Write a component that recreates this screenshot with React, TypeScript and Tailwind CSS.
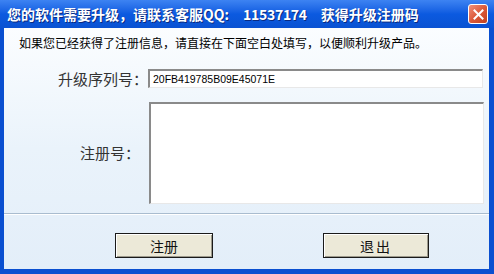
import React from "react";

const cjk = { fontFamily: '"Noto Sans CJK SC", "Noto Sans", sans-serif' };

export default function App() {
  return (
    <div
      className="w-[494px] h-[274px] flex flex-col bg-[#0a4fd0] overflow-hidden"
      style={cjk}
    >
      {/* Title bar */}
      <div className="h-[28px] shrink-0 flex items-center pl-[7px] pr-[6px] bg-gradient-to-b from-[#3d83f2] via-[#0b5ae0] to-[#0a52d2]">
        <div className="flex items-center text-[14px] font-bold text-white leading-none whitespace-nowrap [text-shadow:1px_1px_0_#0a2a80]">
          <span>您的软件需要升级，请联系客服QQ:</span>
          <span className="ml-[14px] tracking-[-0.3px]">11537174</span>
          <span className="ml-[14px]">获得升级注册码</span>
        </div>
        <div className="ml-auto w-[20px] h-[20px] rounded-[3px] border border-white bg-gradient-to-br from-[#f0907a] via-[#dc5a3a] to-[#c0401e] flex items-center justify-center">
          <svg width="11" height="11" viewBox="0 0 11 11">
            <path d="M1.5 1.5 L9.5 9.5 M9.5 1.5 L1.5 9.5" stroke="white" strokeWidth="2" strokeLinecap="square" />
          </svg>
        </div>
      </div>

      {/* Client area */}
      <div className="flex-1 ml-[4px] mr-[5px] mb-[5px] flex flex-col bg-gradient-to-b from-[#fbfdff] via-[#eaf3fb] to-[#e3eef9]">
        <div className="pt-[7px] pl-[15px] text-[12px] leading-[16px] text-black whitespace-nowrap">
          如果您已经获得了注册信息，请直接在下面空白处填写，以便顺利升级产品。
        </div>

        <div className="mt-[18px] flex items-center">
          <div className="w-[144px] text-right text-[15px] leading-[18px] text-[#333]">升级序列号：</div>
          <div className="w-[335px] h-[19px] bg-white border-t-2 border-l-2 border-t-[#8a8a8a] border-l-[#8a8a8a] border-r border-b border-r-[#e8e8e8] border-b-[#e8e8e8] flex items-center pl-[3px]">
            <span className="text-[10.5px] leading-none text-black" style={{ fontFamily: '"Liberation Sans", Arial, sans-serif' }}>
              20FB419785B09E45071E
            </span>
          </div>
        </div>

        <div className="mt-[14px] flex items-center">
          <div className="w-[145px] text-right pr-[9px] text-[15px] leading-[18px] text-[#333]">注册号：</div>
          <div className="w-[335px] h-[102px] bg-white border-t-2 border-l-2 border-t-[#8a8a8a] border-l-[#8a8a8a] border-r border-b border-r-[#e8e8e8] border-b-[#e8e8e8]" />
        </div>

        <div className="mt-[9px] h-[2px] border-t border-t-[#a9bccf] border-b border-b-white" />

        <div className="mt-[18px] flex">
          <button className="ml-[111px] w-[98px] h-[25px] bg-[#ece9d8] border border-[#1a1a1a] shadow-[inset_1px_1px_0_#ffffff,inset_-1px_-1px_0_#9d9a8c] text-[14px] leading-none text-[#111]">
            注册
          </button>
          <button className="ml-[110px] w-[106px] h-[25px] bg-[#ece9d8] border border-[#1a1a1a] shadow-[inset_1px_1px_0_#ffffff,inset_-1px_-1px_0_#9d9a8c] text-[14px] leading-none text-[#111] tracking-[2px]">
            退出
          </button>
        </div>
      </div>
    </div>
  );
}
